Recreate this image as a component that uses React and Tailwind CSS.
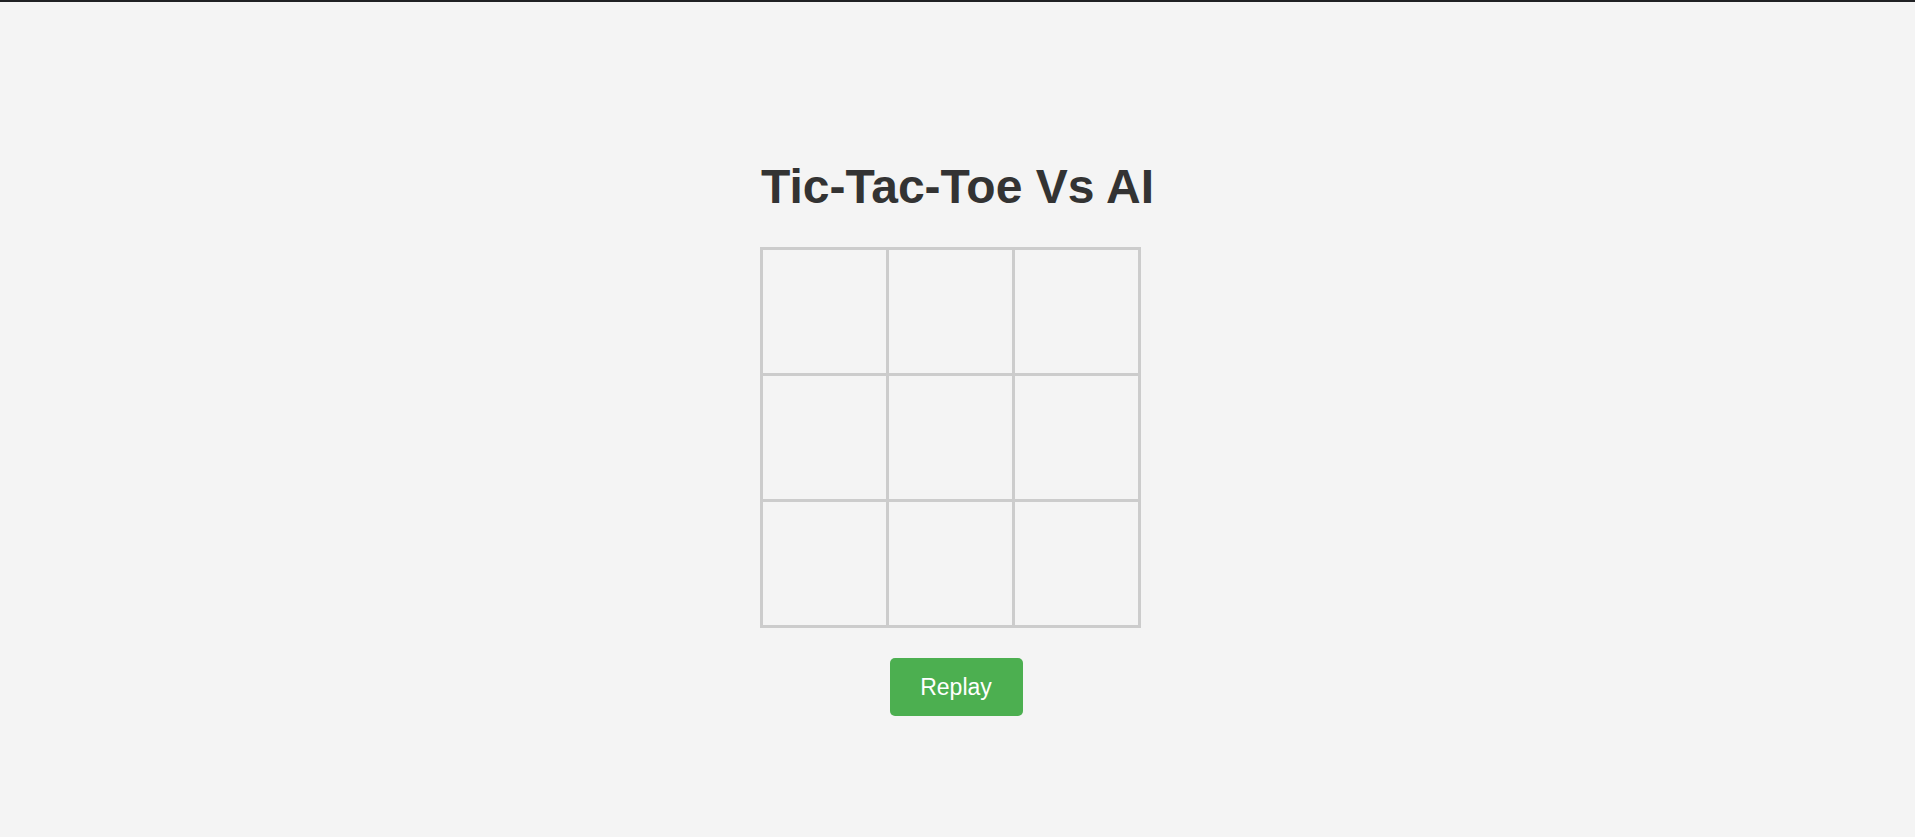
export default function App() {
  const cells = Array.from({ length: 9 });
  return (
    <div
      className="min-h-screen w-full bg-[#f4f4f4] border-t-2 border-[#202124]"
      style={{ fontFamily: '"Liberation Sans", Arial, sans-serif' }}
    >
      <div className="flex flex-col items-center pt-[157px]">
        <h1 className="text-[48px] leading-[56px] font-bold text-[#333333] m-0">
          Tic-Tac-Toe Vs AI
        </h1>
        <div className="w-[395px] mt-[32px]">
          <div className="grid grid-cols-[repeat(3,126px)] w-[381px] border-l-[3px] border-t-[3px] border-[#cccccc]">
            {cells.map((_, i) => (
              <div
                key={i}
                className="w-[126px] h-[126px] border-r-[3px] border-b-[3px] border-[#cccccc]"
              />
            ))}
          </div>
        </div>
        <button className="mt-[30px] mr-[3px] w-[133px] h-[58px] rounded-[5px] bg-[#4caf50] text-white text-[23px] leading-none cursor-pointer">
          Replay
        </button>
      </div>
    </div>
  );
}
